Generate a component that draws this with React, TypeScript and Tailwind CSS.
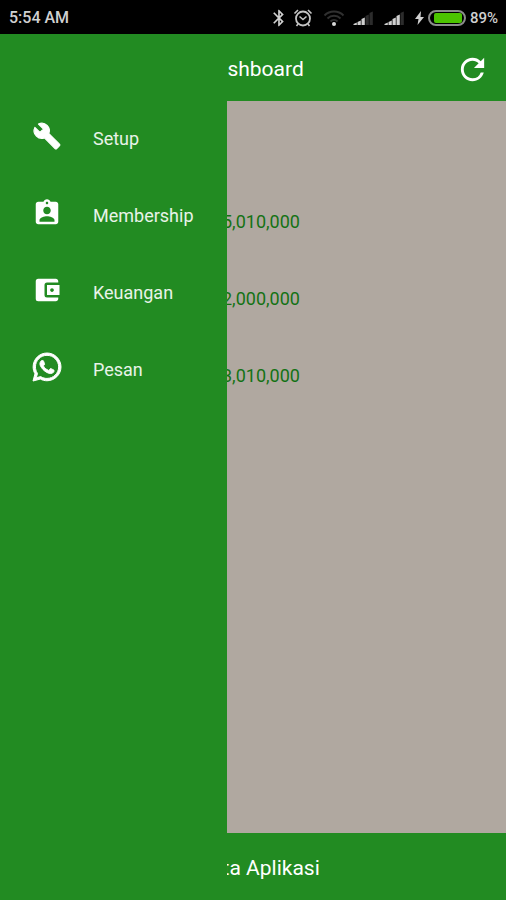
import { FaWhatsapp } from "react-icons/fa";
import {
  MdAccountBalanceWallet,
  MdAssignmentInd,
  MdBluetooth,
  MdRefresh,
} from "react-icons/md";

const WrenchIcon = () => (
  <svg
    viewBox="0 0 24 24"
    className="size-7 overflow-visible"
    fill="currentColor"
    stroke="currentColor"
    strokeLinejoin="round"
  >
    <path d="M22.7 19l-9.1-9.1c.9-2.3.4-5-1.5-6.9-2-2-5-2.4-7.4-1.3L9 6 6 9 1.6 4.7C.4 7.1.9 10.1 2.9 12.1c1.9 1.9 4.6 2.4 6.9 1.5l9.1 9.1c.4.4 1 .4 1.4 0l2.3-2.3c.5-.4.5-1.1.1-1.4z" />
  </svg>
);

const menu = [
  { label: "Setup", icon: <WrenchIcon /> },
  { label: "Membership", icon: <MdAssignmentInd className="size-[30px]" /> },
  { label: "Keuangan", icon: <MdAccountBalanceWallet className="size-[30px]" /> },
  {
    label: "Pesan",
    icon: <FaWhatsapp className="size-8 overflow-visible stroke-current stroke-[16]" />,
  },
];

const amounts = ["5,010,000", "2,000,000", "3,010,000"];

const AlarmIcon = () => (
  <svg viewBox="0 0 20 20" className="size-5" fill="none" stroke="#c4c4c4">
    <circle cx="10" cy="10.5" r="7" strokeWidth="1.8" />
    <path d="M6.5 8.5 10 11.5l3.5-3" strokeWidth="1.6" />
    <path d="M1.5 5.5 5 2M18.5 5.5 15 2M5 16l-1.5 2M15 16l1.5 2" strokeWidth="1.6" />
  </svg>
);

const WifiIcon = () => (
  <svg viewBox="0 0 22 18" className="h-[18px] w-[22px]" fill="none" stroke="#303030">
    <path d="M1.5 6.5a13.5 13.5 0 0 1 19 0" strokeWidth="2" />
    <path d="M4.5 9.5a9.2 9.2 0 0 1 13 0" strokeWidth="2" />
    <path d="M7.5 12.5a5 5 0 0 1 7 0" strokeWidth="2" />
    <circle cx="11" cy="15" r="2" fill="#d8d8d8" stroke="none" />
  </svg>
);

const SignalIcon = ({ bars }: { bars: number }) => (
  <svg viewBox="0 0 21 14" className="h-3.5 w-[21px]">
    {[2, 4, 7, 10, 13].map((height, index) => (
      <path
        key={index}
        d={`M${index * 4 + 0.5} 14v-${height - 1}l3.3-1.5v${height + 0.5}z`}
        fill={index < bars ? "#d0d0d0" : "#2c2c2c"}
      />
    ))}
  </svg>
);

const BatteryIcon = () => (
  <svg viewBox="0 0 38 16" className="h-4 w-[38px]">
    <rect x="1" y="1" width="36" height="14" rx="7" fill="#000" stroke="#8c8c8c" strokeWidth="2" />
    <rect x="6" y="3" width="28" height="10" rx="2" fill="#4cc400" />
  </svg>
);

const StatusBar = () => (
  <div className="flex h-[34px] items-center bg-black pl-[9px] pr-2 pt-0.5 text-[#d0d0d0]">
    <span className="text-base font-medium">5:54 AM</span>
    <div className="ml-auto flex items-center">
      <MdBluetooth className="mr-1 size-5" />
      <AlarmIcon />
      <span className="ml-2.5">
        <WifiIcon />
      </span>
      <span className="ml-2">
        <SignalIcon bars={3} />
      </span>
      <span className="ml-2.5">
        <SignalIcon bars={4} />
      </span>
      <svg viewBox="0 0 9 14" className="ml-2.5 h-3.5 w-[9px]" fill="#d0d0d0">
        <path d="M6 0 0 8h3.5L2.5 14 9 6H5.5z" />
      </svg>
      <span className="mx-1">
        <BatteryIcon />
      </span>
      <span className="text-[15px] font-medium">89%</span>
    </div>
  </div>
);

const Drawer = () => (
  <nav className="absolute inset-y-0 left-0 w-[227px] bg-[#228b22] pt-[66px]">
    <ul>
      {menu.map((item) => (
        <li key={item.label}>
          <a href="#" className="flex h-[77px] items-center text-lg text-white/90">
            <span className="flex w-[93px] justify-center pb-1.5 text-white">
              {item.icon}
            </span>
            {item.label}
          </a>
        </li>
      ))}
    </ul>
  </nav>
);

export default function App() {
  return (
    <div className="flex min-h-screen flex-col font-['Roboto',sans-serif]">
      <StatusBar />
      <div className="relative flex flex-1 flex-col">
        <header className="relative flex h-[67px] items-center justify-center bg-[#228b22] pt-1 text-white">
          <h1 className="text-[21px]">Dashboard</h1>
          <button aria-label="Refresh" className="absolute right-4">
            <MdRefresh className="size-[35px]" />
          </button>
        </header>
        <main className="flex-1 bg-[#b0a8a0] pt-[82px]">
          <ul className="text-lg text-[#147214]">
            {amounts.map((amount) => (
              <li key={amount} className="flex h-[77px] items-center pl-[222px]">
                {amount}
              </li>
            ))}
          </ul>
        </main>
        <footer className="flex h-[67px] items-center justify-center bg-[#228b22] pt-1 text-[21px] text-white">
          Berita Aplikasi
        </footer>
        <Drawer />
      </div>
    </div>
  );
}
